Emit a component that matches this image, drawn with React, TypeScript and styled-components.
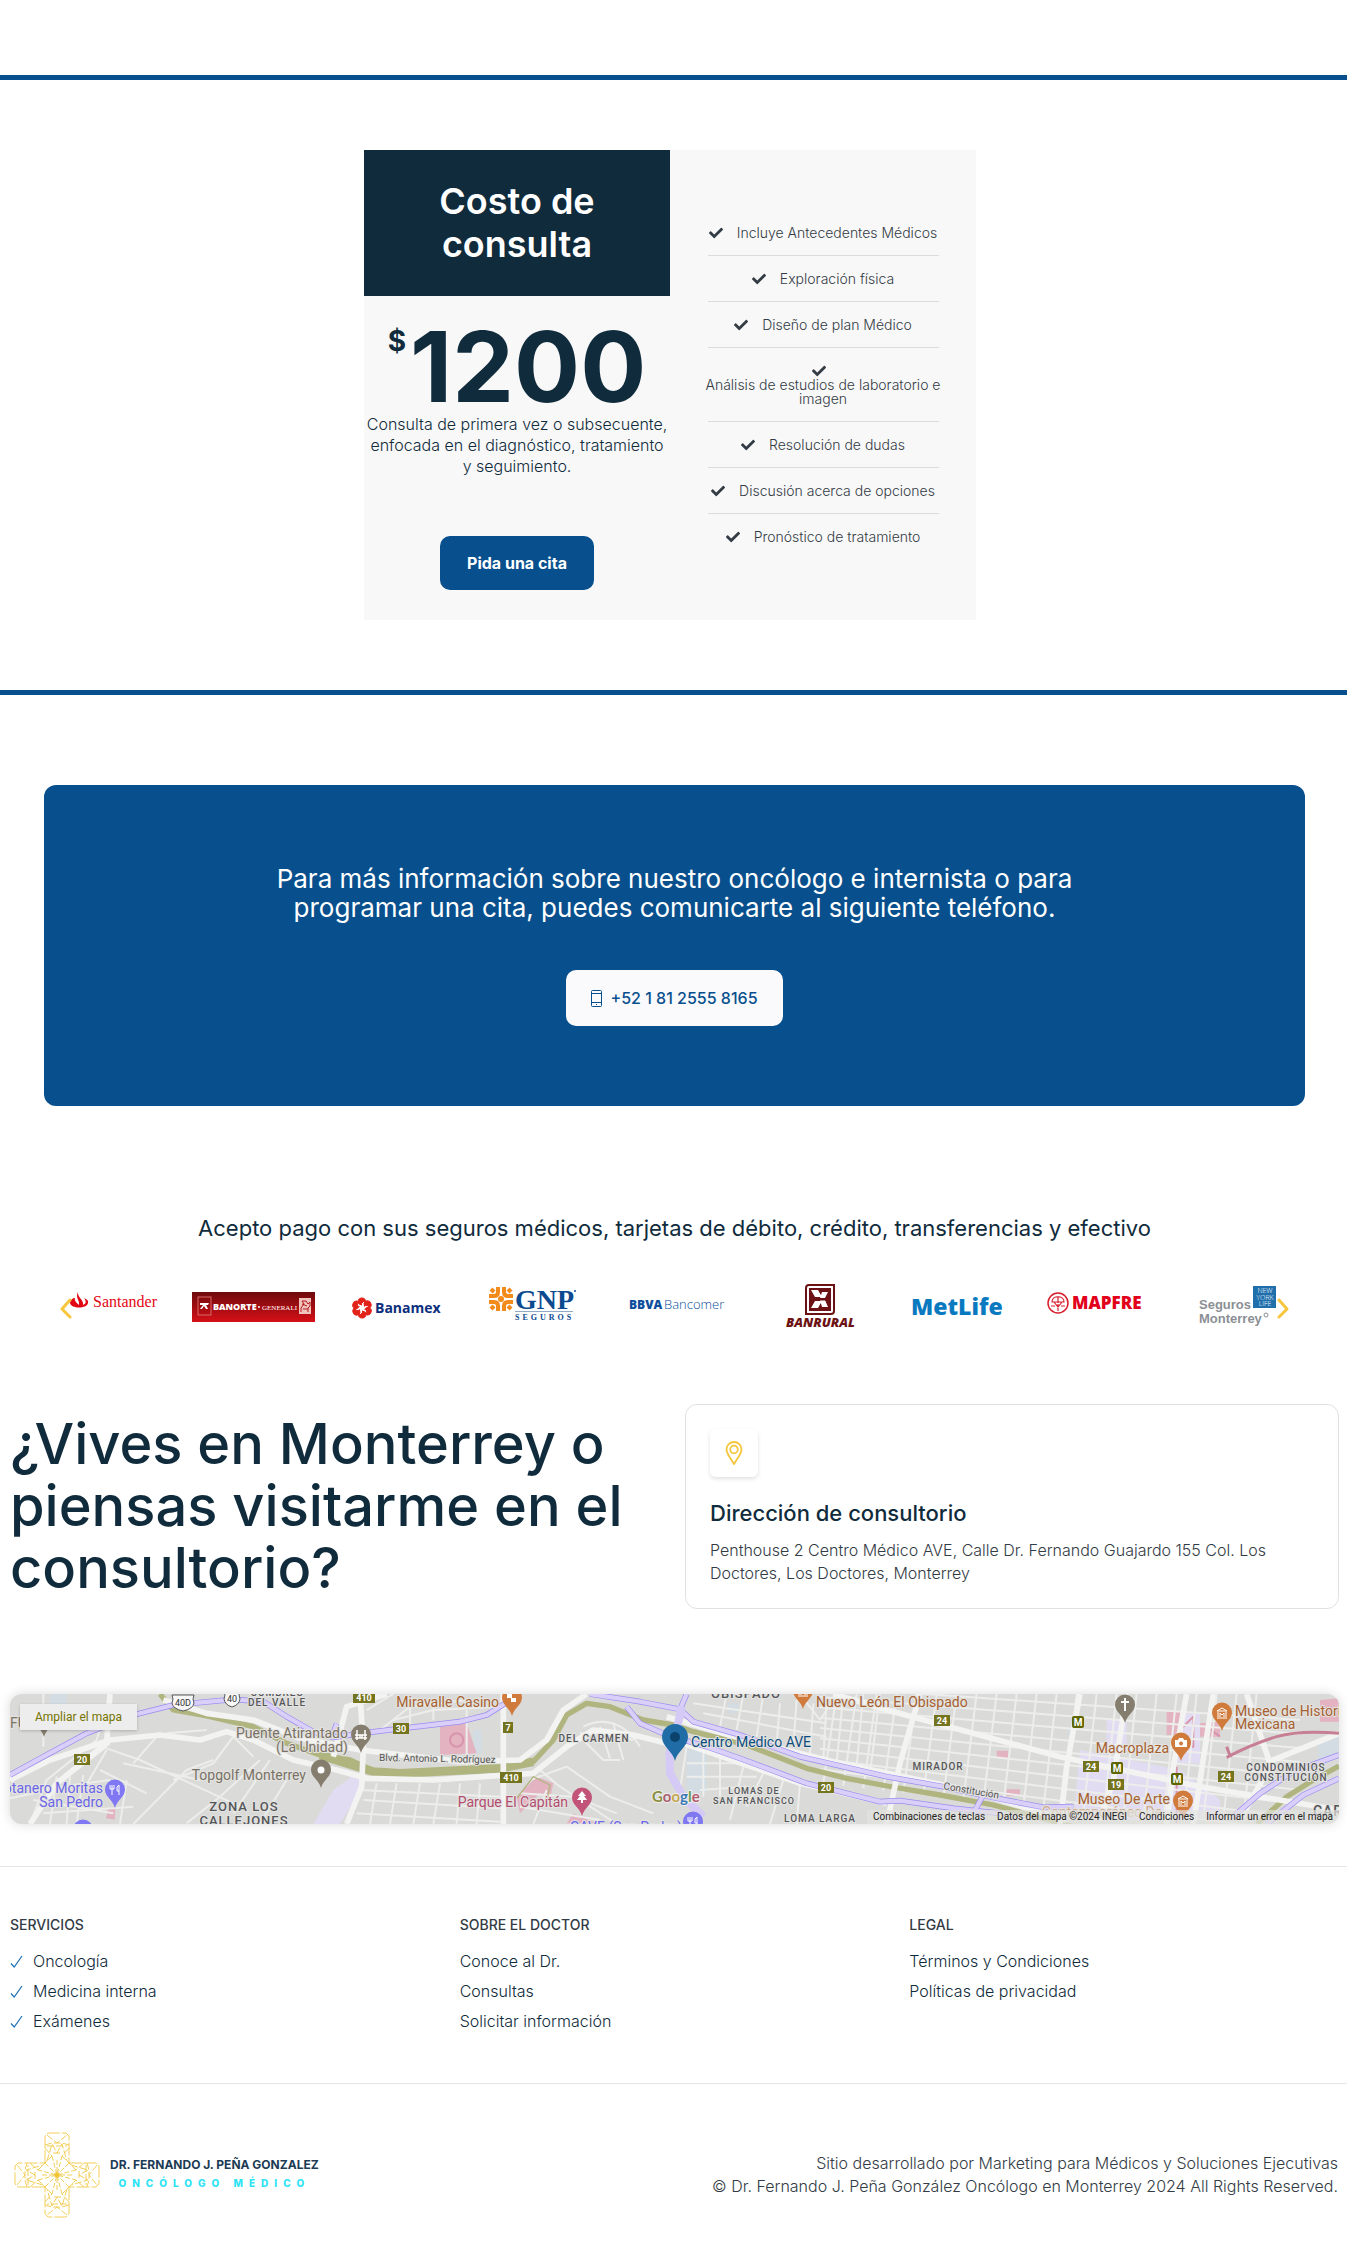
import React from "react";
import styled, { createGlobalStyle } from "styled-components";
import { FaCheck } from "react-icons/fa";

const navy = "#102b3c";
const blue = "#084f8d";
const yellow = "#f5c53c";

const GlobalStyle = createGlobalStyle`
  *, *::before, *::after { box-sizing: border-box; }
  body {
    margin: 0;
    background: #fff;
    color: #333b45;
    font-family: Inter, "Liberation Sans", sans-serif;
    font-size: 16px;
    font-weight: 300;
  }
  h1, h2, h3, h4, p, ul { margin: 0; padding: 0; }
  ul { list-style: none; }
  a { color: inherit; text-decoration: none; }
  button { font: inherit; border: 0; cursor: pointer; }
`;

const Page = styled.div`
  padding-top: 75px;
  overflow: hidden;
`;

/* ---------- Pricing ---------- */

const PricingSection = styled.section`
  display: flex;
  justify-content: center;
  padding: 70px 20px;
  border: solid ${blue};
  border-width: 5px 0;
`;

const PriceCard = styled.div`
  display: grid;
  grid-template-columns: 1fr 1fr;
  width: 612px;
  margin-right: 7px;
  background: #f8f8f8;
`;

const PriceColumn = styled.div`
  display: flex;
  flex-direction: column;
  align-items: center;
  padding-bottom: 30px;
`;

const PriceHeader = styled.h2`
  width: 100%;
  padding: 30px 60px;
  background: ${navy};
  color: #fff;
  font-size: 36px;
  font-weight: 600;
  line-height: 43px;
  text-align: center;
`;

const Price = styled.p`
  display: flex;
  align-items: flex-start;
  gap: 4px;
  margin-top: 23px;
  color: ${navy};
  font-size: 98px;
  font-weight: 700;
  line-height: 95px;
`;

const Currency = styled.span`
  padding-top: 6px;
  font-size: 28px;
  line-height: 32px;
`;

const PriceNote = styled.p`
  color: ${navy};
  font-size: 16px;
  line-height: 21px;
  text-align: center;
`;

const PrimaryButton = styled.button`
  height: 54px;
  margin-top: 59px;
  padding: 0 27px;
  border-radius: 10px;
  background: ${blue};
  color: #fff;
  font-size: 16px;
  font-weight: 700;
`;

const Features = styled.ul`
  display: flex;
  flex-direction: column;
  justify-content: center;
  padding: 0 30px;
  font-size: 14px;
  line-height: 14px;
`;

const Feature = styled.li`
  display: flex;
  flex-wrap: wrap;
  align-items: center;
  justify-content: center;
  column-gap: 6px;
  text-align: center;

  & + &::before {
    content: "";
    flex: 0 0 231px;
    height: 1px;
    margin: 15px 5px 16px;
    background: #dadcde;
  }
`;

const FeatureCheck = styled(FaCheck)`
  margin-right: 8px;
`;

/* ---------- Call to action ---------- */

const CallBox = styled.section`
  display: flex;
  flex-direction: column;
  align-items: center;
  gap: 48px;
  margin: 90px 42px 0 44px;
  padding: 79px 20px 80px;
  border-radius: 12px;
  background: ${blue};
`;

const CallTitle = styled.h2`
  max-width: 860px;
  color: #fff;
  font-size: 26px;
  font-weight: 400;
  line-height: 29px;
  text-align: center;
`;

const PhoneLink = styled.a`
  display: flex;
  align-items: center;
  gap: 8px;
  height: 56px;
  padding: 0 25px;
  border-radius: 10px;
  background: #fafafc;
  color: ${blue};
  font-size: 16px;
  font-weight: 500;
`;

/* ---------- Payments ---------- */

const Payments = styled.section`
  margin: 108px 42px 0 44px;
`;

const PaymentsTitle = styled.h2`
  color: ${navy};
  font-size: 22px;
  font-weight: 400;
  line-height: 28px;
  text-align: center;
`;

const Carousel = styled.div`
  position: relative;
  margin-top: 38px;
`;

const LogoRow = styled.ul`
  display: grid;
  grid-template-columns: repeat(9, 1fr);
`;

const LogoCell = styled.li`
  display: flex;
  justify-content: center;
`;

const ArrowButton = styled.button<{ $side: "left" | "right" }>`
  position: absolute;
  top: 16px;
  ${(p) => p.$side}: 16px;
  display: flex;
  padding: 0;
  background: none;
`;

/* ---------- Location ---------- */

const Location = styled.section`
  display: grid;
  grid-template-columns: 1fr 654px;
  gap: 20px;
  align-items: center;
  margin: 74px 8px 0 10px;
`;

const LocationTitle = styled.h2`
  padding-bottom: 2px;
  color: ${navy};
  font-size: 56px;
  font-weight: 500;
  line-height: 62px;
`;

const AddressCard = styled.div`
  padding: 24px 24px 23px;
  border: 1px solid #dfe1e3;
  border-radius: 12px;
`;

const PinBox = styled.span`
  display: flex;
  align-items: center;
  justify-content: center;
  width: 48px;
  height: 48px;
  border-radius: 6px;
  box-shadow: 0 2px 4px rgba(0, 0, 0, 0.12);
`;

const AddressTitle = styled.h3`
  margin-top: 22px;
  color: ${navy};
  font-size: 22px;
  font-weight: 500;
  line-height: 28px;
`;

const AddressText = styled.p`
  margin-top: 12px;
  font-size: 16px;
  line-height: 23px;
`;

const MapFrame = styled.div`
  position: relative;
  height: 130px;
  margin: 85px 8px 0 10px;
  border-radius: 12px;
  overflow: hidden;
  background: #dadbd8;
  box-shadow: 0 0 12px rgba(0, 0, 0, 0.15);
  font-family: Roboto, sans-serif;
  font-weight: 400;
`;

const MapArt = styled.svg`
  display: block;
  width: 100%;
  height: 100%;
`;

const MapLink = styled.a`
  position: absolute;
  top: 10px;
  left: 10px;
  padding: 0 15px;
  background: #ededed;
  box-shadow: 0 1px 3px rgba(0, 0, 0, 0.2);
  color: #747400;
  font-size: 12px;
  line-height: 26px;
`;

const MapCredits = styled.div`
  position: absolute;
  right: 0;
  bottom: 0;
  display: flex;
  gap: 12px;
  padding: 0 6px;
  background: rgba(226, 226, 224, 0.7);
  color: #222;
  font-size: 10px;
  line-height: 14px;
`;

/* ---------- Footer ---------- */

const Footer = styled.footer`
  margin-top: 42px;
  border-top: 1px solid #e6e6e6;
`;

const FooterColumns = styled.div`
  display: grid;
  grid-template-columns: repeat(3, 1fr);
  gap: 20px;
  padding: 48px 8px 50px 10px;
  border-bottom: 1px solid #e6e6e6;
`;

const FooterHeading = styled.h4`
  font-size: 14px;
  font-weight: 500;
  line-height: 20px;
  text-transform: uppercase;
`;

const FooterList = styled.ul`
  display: grid;
  gap: 6px;
  margin-top: 14px;
  color: ${navy};
  line-height: 24px;
`;

const FooterLink = styled.a`
  display: flex;
  align-items: center;
  gap: 10px;
`;

const FooterBottom = styled.div`
  display: flex;
  align-items: center;
  justify-content: space-between;
  padding: 48px 9px 42px 14px;
`;

const Brand = styled.a`
  display: flex;
  align-items: center;
  gap: 10px;
`;

const BrandText = styled.span`
  display: grid;
  gap: 3px;
  padding-bottom: 4px;
  text-align: center;
`;

const BrandName = styled.strong`
  color: #1c3b54;
  font-size: 12px;
  font-weight: 700;
  line-height: 17px;
`;

const BrandRole = styled.span`
  color: #2fe3f5;
  font-size: 10px;
  font-weight: 800;
  line-height: 14px;
  letter-spacing: 6px;
`;

const Copyright = styled.p`
  line-height: 23px;
  text-align: right;
`;

/* ---------- Icons and logos ---------- */

const PhoneIcon = () => (
  <svg width="11" height="17" viewBox="0 0 11 17" fill="none" stroke={blue} aria-hidden="true">
    <rect x="0.5" y="0.5" width="10" height="16" rx="1" />
    <path d="M0.5 3.5h10M0.5 12.5h10M5 14.5h1" />
  </svg>
);

const PinIcon = () => (
  <svg width="24" height="24" viewBox="0 0 24 24" fill="none" stroke={yellow} strokeWidth="1.8" aria-hidden="true">
    <path d="M12 23C9 17.5 4.5 13 4.500 8.500a7.500 7.500 0 0 1 15 0C19.500 13 15 17.500 12 23z" />
    <circle cx="12" cy="8.500" r="3.800" />
  </svg>
);

const ThinCheck = () => (
  <svg width="13" height="13" viewBox="0 0 13 13" fill="none" stroke="#1d6fb5" strokeWidth="1.200" aria-hidden="true">
    <path d="M1 8.500 4.200 12 12 1" />
  </svg>
);

const Chevron = ({ flip }: { flip?: boolean }) => (
  <svg width="12" height="24" viewBox="0 0 12 24" fill="none" stroke="#f7c63e" strokeWidth="3" strokeLinecap="round" strokeLinejoin="round" aria-hidden="true">
    <path d={flip ? "M2 4l8 9-8 8" : "M10 4 2 13l8 8"} />
  </svg>
);

const Logo = ({ label, children }: { label: string; children: React.ReactNode }) => (
  <LogoCell>
    <svg width="140" height="50" viewBox="0 0 140 50" role="img" aria-label={label}>
      {children}
    </svg>
  </LogoCell>
);

const sans = "Open Sans, sans-serif";
const serif = "Liberation Serif, serif";

const Logos = () => (
  <LogoRow>
    <Logo label="Santander">
      <path d="M34 12c-1 5 6 8 5 13 4-2 3-4 1-7 4 2 4.500 3 4 5-1 6-17 6-18 0 0-3 3-5 5-5-1 3 2 5 4 7 1-5-4-7-1-13z" fill="#e30613" />
      <text x="49" y="27" fontFamily={serif} fontSize="16" fill="#e30613">Santander</text>
    </Logo>
    <Logo label="Banorte Generali">
      <defs>
        <linearGradient id="banorte" x1="0" x2="0" y1="0" y2="1">
          <stop offset="0" stopColor="#6e0a0c" />
          <stop offset="1" stopColor="#d60f17" />
        </linearGradient>
      </defs>
      <rect x="8" y="12" width="123" height="30" fill="url(#banorte)" />
      <rect x="14" y="17" width="13" height="18" fill="none" stroke="#d86b66" />
      <path d="M16 23h9l-1 2h-2l2 4h-2l-2-3-2 3h-2l3-4h-3z" fill="#fff" />
      <text x="29" y="30" fontFamily={sans} fontSize="9" fontWeight="800" fill="#fff">BANORTE</text>
      <circle cx="75" cy="27" r="1" fill="#fff" />
      <text x="78" y="30" fontFamily={serif} fontSize="7" fill="#fff">GENERALI</text>
      <rect x="115" y="18" width="12" height="16" fill="#f1c3bd" />
      <path d="M117 32v-4l3-4-2-3h4l2 3 2-2v4l-2 2v4M119 29h5M118 24l5 2" stroke="#b3181c" fill="none" />
    </Logo>
    <Logo label="Banamex">
      {[0, 60, 120, 180, 240, 300].map((a) => (
        <path key={a} transform={`rotate(${a} 38 28)`} d="M35 24c-2-4 0-6 3-6s5 3 3 6l-1-3-3 3 1 1z" fill="#e2231a" stroke="#e2231a" />
      ))}
      <text x="51" y="33" fontFamily={sans} fontSize="14" fontWeight="700" fill="#0d2f7d">Banamex</text>
    </Logo>
    <Logo label="GNP Seguros">
      {[0, 90, 180, 270].map((a) => (
        <g key={a} transform={`rotate(${a} 37 19)`} fill="none" stroke="#f28a1c">
          <path d="M34 7v5c0 3-2 4-4 4h-5" strokeWidth="4" />
          <path d="M30 12l-3-3" strokeWidth="4" />
        </g>
      ))}
      <circle cx="37" cy="19" r="3" fill="#f28a1c" />
      <text x="51" y="29" fontFamily={serif} fontSize="28" fontWeight="700" fill="#0b4a8f">GNP</text>
      <circle cx="111" cy="11" r="1" fill="#0b4a8f" />
      <path d="M51 31.500h58" stroke="#8fa9c8" />
      <text x="51" y="40" fontFamily={serif} fontSize="8" fontWeight="700" letterSpacing="3" fill="#0b4a8f">SEGUROS</text>
    </Logo>
    <Logo label="BBVA Bancomer">
      <text x="25" y="29" fontFamily={sans} fontSize="12" fontWeight="800" fill="#0b4f9c">BBVA</text>
      <text x="60" y="29" fontFamily={sans} fontSize="13" fill="#0b4f9c">Bancomer</text>
    </Logo>
    <Logo label="Banrural">
      <path d="M64 5h25v26a3 3 0 0 1-3 3H61V8a3 3 0 0 1 3-3z" fill="#fff" stroke="#6d1214" strokeWidth="2" />
      <rect x="64" y="8" width="22" height="23" fill="#6d1214" />
      <path d="M66 10h7l4 7h-7zM66 28h7l4-7h-7zM77 12h6l-3 6h-5zM77 27h6l-3-7h-5z" fill="#fff" />
      <path d="M67 19.500h16" stroke="#6d1214" strokeWidth="2" />
      <text x="41" y="47" fontFamily={sans} fontSize="13" fontWeight="800" fontStyle="italic" fill="#6d1214">BANRURAL</text>
    </Logo>
    <Logo label="MetLife">
      <text x="26" y="35" fontFamily={sans} fontSize="23" fontWeight="800" fill="#0a7ac0">MetLife</text>
    </Logo>
    <Logo label="Mapfre">
      <circle cx="33" cy="23" r="10" fill="none" stroke="#d81e2c" strokeWidth="1.500" />
      <path d="M33 31v-7M27 22c0-7 12-7 12 0zM29 22l4 5 4-5M33 17v6M26 26h4M36 26h4" fill="none" stroke="#d81e2c" strokeWidth="1.200" />
      <text x="47" y="29" fontFamily={sans} fontSize="17" fontWeight="800" fill="#e2001a">MAPFRE</text>
    </Logo>
    <Logo label="Seguros Monterrey New York Life">
      <text x="34" y="29" fontFamily="Liberation Sans, sans-serif" fontSize="13" fontWeight="700" fill="#8b8f94">Seguros</text>
      <text x="34" y="43" fontFamily="Liberation Sans, sans-serif" fontSize="13" fontWeight="700" fill="#8b8f94">Monterrey</text>
      <circle cx="101" cy="35" r="2" fill="none" stroke="#8b8f94" />
      <rect x="88" y="6" width="23" height="22" fill="#1f6fad" />
      <g fontFamily={sans} fontSize="7" fill="#fff" textAnchor="middle">
        <text x="100" y="13">NEW</text>
        <text x="100" y="20">YORK</text>
        <text x="100" y="26">LIFE</text>
      </g>
    </Logo>
  </LogoRow>
);

const crossArm = (
  <>
    <path d="M31 31V4l3-3h18l3 3v27" strokeDasharray="13 2" />
    <path d="M33 3l10 8L53 3M31 13l7-2h10l7 2M33 29l5-17 5 9 5-9 5 17M31 16l7 8-7 7M55 16l-7 8 7 7M39 21h8M33 14h20" strokeDasharray="7 2" />
    <path d="M38 24l5 19 5-19M31 31l12 12M43 28v15" strokeDasharray="5 2" />
  </>
);

const BrandMark = () => (
  <svg width="86" height="86" viewBox="0 0 86 86" fill="none" stroke="#f2cf5b" aria-hidden="true">
    {[0, 90, 180, 270].map((a) => (
      <g key={a} transform={`rotate(${a} 43 43)`}>{crossArm}</g>
    ))}
    <circle cx="43" cy="43" r="2.500" fill="#f2c230" />
  </svg>
);

/* ---------- Map ---------- */

type Pin = { x: number; y: number; fill: string; glyph: React.ReactNode };

const tree = <path d="M0-7l4 5H2l3 4H1v3h-2V2h-4l3-4h-2z" fill="#fff" />;
const museum = <path d="M-5-2l5-3 5 3zM-4-1v5M4-1v5M-5 5H5M-2 4V0l2 2 2-2v4" stroke="#fff" fill="none" />;
const camera = <path d="M-6-3h3l1-2h4l1 2h3v7H-6zM0-1.500a2 2 0 1 0 .1 0z" fill="#fff" fillRule="evenodd" />;
const cutlery = <path d="M-3-5v10M-5-5v4h4v-4M4 5V-5Q1-4 2 1h2" stroke="#fff" fill="none" />;
const bridge = <path d="M-6 3H6M-6 0H6M-4-5V5M4-5V5M-1 0v3M1 0v3" stroke="#fff" fill="none" strokeWidth="1.500" />;
const church = <path d="M0-7V6M-4-3H4" stroke="#fff" strokeWidth="2" />;
const dot = <circle r="3.500" fill="#fff" />;
const dice = <path d="M-5-4h5v4h4v4h-5v-4h-4z" fill="#fff" />;

const pins: Pin[] = [
  { x: 34, y: 43, fill: "#857d6e", glyph: null },
  { x: 351, y: 59, fill: "#857d6e", glyph: bridge },
  { x: 311, y: 94, fill: "#857d6e", glyph: dot },
  { x: 105, y: 114, fill: "#7f78f2", glyph: cutlery },
  { x: 73, y: 154, fill: "#7f78f2", glyph: null },
  { x: 502, y: 22, fill: "#d07a3c", glyph: dice },
  { x: 572, y: 122, fill: "#c25479", glyph: tree },
  { x: 683, y: 146, fill: "#7f78f2", glyph: cutlery },
  { x: 793, y: 15, fill: "#d07a3c", glyph: museum },
  { x: 1115, y: 29, fill: "#857d6e", glyph: church },
  { x: 1171, y: 67, fill: "#d07a3c", glyph: camera },
  { x: 1212, y: 37, fill: "#d07a3c", glyph: museum },
  { x: 1173, y: 125, fill: "#d07a3c", glyph: museum },
];

const shields: [string, number, number][] = [
  ["20", 72, 66], ["410", 354, 4], ["30", 391, 35], ["7", 498, 34], ["410", 501, 84],
  ["20", 816, 94], ["24", 932, 27], ["24", 1081, 73], ["19", 1106, 91], ["24", 1216, 83],
];

const metros: [number, number][] = [[1068, 28], [1107, 74], [1167, 85]];

const minorRoads = [
  "M130 42V200M150 330L320 200M30 355L150 330 250 240 330 190M250 330L320 210M90 432L140 300 290 180 330 42M320 205L420 240 700 370M370 250L600 300M400 432L560 270 640 240M470 170L400 250M440 340L300 270M500 160L620 150M520 300L640 250 700 170M560 430L660 350 780 240M810 240L700 400M700 170L760 230M860 300L780 430",
  "M110 330L330 300M100 360L340 400M170 290L150 432M210 290L200 432M250 285L230 432M380 300L360 432M130 400L400 380",
  "M1080 330L1500 350M1090 360L1500 385M1070 400L1500 425M1130 310L1110 432M1190 310L1170 432M1260 310L1240 432M1320 310L1300 432M1380 310L1370 432M1440 310L1430 432",
  "M1100 90L1180 42M1140 150L1230 80 1400 60M1180 120L1300 90 1500 80M1230 60V140M1300 60V120M1400 90V280",
  "M1740 160L1820 160 1900 180M1750 180L1810 240 1860 240M1800 140L1830 235M1840 130L1870 240M1750 140C1830 100 1890 150 1920 200",
  "M1590 300L1700 260 1830 350 1960 400M1620 270L1680 320 1850 432M1560 340L1720 350 1850 400M1560 380L1800 420M1640 330L1600 432",
  "M2060 200L2040 330M2110 220V350M2160 230V350M2060 250H2240M2060 290H2270M2100 330L2240 320M2230 260L2190 420M2290 280L2240 380M2350 300L2310 432M2400 310L2390 432",
  "M2080 70L2480 130M2110 100L2480 170M2180 42L2160 140M2230 42L2210 150M2290 42L2270 170M2340 70L2330 190M2390 60L2380 200M2440 70L2430 220M2480 60L2470 240M2530 42L2510 250M2590 42L2570 260M2640 42L2610 280M2400 42L2460 120 2500 60",
];

const gridRoads = [
  ...Array.from({ length: 22 }, (_, i) => `M${2510 + i * 60} 42L${2470 + i * 60} ${310 + Math.min(i * 7, 110)}`),
  ...Array.from({ length: 9 }, (_, i) => `M2460 ${20 + i * 31}L3900 ${120 + i * 42}`),
];

const whiteRoads = [
  "M30 300L150 240 330 180 480 165 600 180 680 155 760 180 880 240 1010 270 1100 295 1300 300 1600 280 1700 200 1780 150 1900 165 2000 190",
  "M490 60L620 100 760 120 900 175 1080 210 1380 245 1560 240 1640 180 1690 90 1760 42",
  "M1080 42L1090 200 1085 320 1040 432M330 42L320 190 170 310 90 432M1000 230L1040 80 1160 42M1510 42V432",
  "M2000 110L2240 180 2500 245 2900 330 3200 420M2050 190L2400 310 2660 370",
  "M2760 42L2700 250 2660 432M3240 42L3200 260 3180 432M3380 42L3340 300 3300 420M3560 42L3520 260 3500 432M2500 42L2661 90 3180 230 3600 320 4017 390M3640 42L3580 432M3740 42L3810 250M4017 160L3820 240 3720 420",
];

const purpleRoads = [
  "M30 285L130 230 260 160 400 105 520 75 700 58 790 65 860 110 940 155 1000 172 1080 160 1380 125 1460 105 1560 42",
  "M1000 160L1010 130",
  "M1770 42L1920 65 2040 88 2060 42M2040 88L2080 125 2220 165 2400 230 2661 290 2830 320 2990 355 3130 382 3220 380",
  "M1880 80L1920 130 2000 165 2120 200 2220 235 2420 310 2640 365 2700 362 2861 385 3000 400",
  "M3700 410L3780 340 3880 275 4017 225M3800 432L3910 345 4017 295M2950 345L2920 400",
];

const caps: [string, number, number, number][] = [
  ["CUMBRES", 267, 2, 10], ["DEL VALLE", 267, 12, 10], ["ZONA LOS", 234, 117, 13], ["CALLEJONES", 234, 131, 13],
  ["DEL CARMEN", 584, 48, 10], ["OBISPADO", 736, 4, 13], ["LOMAS DE", 744, 100, 9], ["SAN FRANCISCO", 744, 110, 9],
  ["LOMA LARGA", 810, 128, 10], ["MIRADOR", 928, 76, 10], ["CONDOMINIOS", 1276, 77, 10], ["CONSTITUCIÓN", 1276, 87, 10],
  ["CAR", 1318, 122, 14],
];

type Place = [string, number, number, string, "start" | "end"];
const places: Place[] = [
  ["Puente Atirantado", 338, 44, "#7a7165", "end"],
  ["(La Unidad)", 338, 58, "#7a7165", "end"],
  ["Topgolf Monterrey", 296, 86, "#7a7165", "end"],
  ["Botanero Moritas", 93, 99, "#6a64e6", "end"],
  ["San Pedro", 93, 113, "#6a64e6", "end"],
  ["FU", 0, 34, "#7a7165", "start"],
  ["Miravalle Casino", 489, 13, "#a65f30", "end"],
  ["Parque El Capitán", 558, 113, "#b34c70", "end"],
  ["GAVE (San Pedro)", 560, 138, "#6a64e6", "start"],
  ["Centro Médico AVE", 681, 53, "#0b4c7d", "start"],
  ["Nuevo León El Obispado", 806, 13, "#a65f30", "start"],
  ["Macroplaza", 1159, 59, "#a65f30", "end"],
  ["Museo de Historia", 1225, 22, "#a65f30", "start"],
  ["Mexicana", 1225, 35, "#a65f30", "start"],
  ["Museo De Arte", 1160, 110, "#a65f30", "end"],
];

const pinPath = "M0 0C-2-8-10-11-10-18.500a10 10 0 0 1 20 0C10-11 2-8 0 0z";

const MapDrawing = () => (
  <MapArt viewBox="0 0 1329 130" preserveAspectRatio="xMidYMid slice" role="img" aria-label="Mapa de Monterrey">
    <g transform="scale(0.33333) translate(-30 -42)" fill="none" strokeLinejoin="round">
      <path d="M150 42h50v40h-50zM1420 150h25v70h-25zM2060 210h60v130h-60zM2185 70h30v30h-30zM3955 180l62-20v60l-62 50zM3205 150h20v40h-20z" fill="#d2dce2" />
      <path d="M1000 330l70-50 30 20-80 132h-80zM3240 210l300 60 120 90v60h-440zM3320 120h60v100h-60zM3520 100h80v150h-80z" fill="#e2dcf3" />
      <path d="M1320 140l80-10 30 90-110 5zM3500 95h40v70h-40zM3960 60l57-5v70h-57zM2990 212h35v22h-35zM3020 328h40v20h-40zM325 385l22-6-3 40-26-4zM1550 350l60-60 50 20-10 50-30-20-60 60zM1720 400l70 30h-90zM3600 130l60-5v45h-60z" fill="#e3b3c2" />
      <path d="M1370 180m-20 0a20 20 0 1 0 40 0a20 20 0 1 0-40 0M3620 140l40 30M3540 150l40-40v90h-30zM3530 260v170" stroke="#d894ad" strokeWidth="6" />
      <g stroke="#edeeec" strokeWidth="6">
        {minorRoads.map((d) => <path key={d} d={d} />)}
        {gridRoads.map((d) => <path key={d} d={d} />)}
      </g>
      <path d="M480 42L520 90 620 108 760 140 860 190 960 225 1050 240 1120 272 1200 280 1380 270 1500 265 1600 245 1660 180 1700 105 1760 70 1830 80 1930 120 2020 135 2080 155 2240 195 2420 265 2540 295 2661 318 2820 345 2980 375 3110 410 3220 440M3771 432L3860 350 3940 300 4017 258" stroke="#b0b57f" strokeWidth="16" />
      <path d="M960 225L1120 275 1200 280 1500 265 1600 245" stroke="#b0b57f" strokeWidth="26" />
      <g stroke="#f3f3f2" strokeWidth="17">
        {whiteRoads.map((d) => <path key={d} d={d} />)}
      </g>
      <g stroke="#9a8cf0" strokeWidth="17">
        {purpleRoads.map((d) => <path key={d} d={d} />)}
      </g>
      <g stroke="#d9cff8" strokeWidth="13">
        {purpleRoads.map((d) => <path key={d} d={d} />)}
      </g>
      <path d="M2045 80L2030 150 2008 220 2010 280 2050 350 2110 410" stroke="#d5c9f6" strokeWidth="24" />
      <path d="M3680 232Q3760 190 3830 170 3900 150 4017 160M3680 200l12 32" stroke="#c77f94" strokeWidth="9" />
      <path d="M1550 355L1600 290 1650 315 1640 365" stroke="#b0b57f" strokeWidth="4" />
    </g>

    <g stroke="#e4e4e1" strokeWidth="2" paintOrder="stroke" strokeLinejoin="round">
      {caps.map(([t, x, y, s]) => (
        <text key={t} x={x} y={y} fontSize={s} fontWeight="500" letterSpacing="1" textAnchor="middle" fill="#55565a">{t}</text>
      ))}
      {places.map(([t, x, y, c, anchor]) => (
        <text key={t} x={x} y={y} fontSize="14" textAnchor={anchor} fill={c}>{t}</text>
      ))}
      <text x="369" y="67" fontSize="10" fill="#555" transform="rotate(1 369 67)">Blvd. Antonio L. Rodríguez</text>
      <text x="933" y="95" fontSize="10" fill="#555" transform="rotate(10 933 95)">Constitución</text>
      <text x="1092" y="123" fontSize="14" textAnchor="middle" fill="#cfa890">Contemporáneo De</text>
    </g>

    {shields.map(([t, x, y], i) => (
      <g key={i} transform={`translate(${x} ${y})`}>
        <rect x={t.length * -3 - 2} y="-6" width={t.length * 6 + 4} height="11" fill="#74741f" />
        <text y="3" fontSize="9" fontWeight="700" textAnchor="middle" fill="#fff">{t}</text>
      </g>
    ))}
    {metros.map(([x, y]) => (
      <g key={x} transform={`translate(${x} ${y})`}>
        <rect x="-6" y="-6" width="12" height="12" rx="2" fill="#5f6600" />
        <text y="4" fontSize="10" fontWeight="700" textAnchor="middle" fill="#fff">M</text>
      </g>
    ))}
    {[["40D", 173, 9, 11], ["40", 222, 5, 8]].map(([t, x, y, r]) => (
      <g key={t} transform={`translate(${x} ${y})`}>
        <path d={`M-${r}-8h${Number(r) * 2}q-2 4 0 8-1 6-${r} 8-${Number(r) - 1}-2-${r}-8 2-4 0-8z`} fill="#f7f7f7" stroke="#55565a" />
        <text y="3" fontSize="9" textAnchor="middle" fill="#333">{t}</text>
      </g>
    ))}
    {pins.map((p) => (
      <g key={`${p.x}-${p.y}`} transform={`translate(${p.x} ${p.y})`}>
        <path d={pinPath} fill={p.fill} />
        <g transform="translate(0 -18)">{p.glyph}</g>
      </g>
    ))}
    <g transform="translate(665 67)">
      <path d="M0 0C-2-10-13-14-13-24a13 13 0 0 1 26 0C13-14 2-10 0 0z" fill="#1f6ca6" />
      <circle cy="-24" r="5" fill="#0b436c" />
    </g>
    <text x="642" y="108" fontSize="15" fontFamily="Lato, sans-serif" fontWeight="700" stroke="#eee" strokeWidth="2" paintOrder="stroke">
      <tspan fill="#8a8f3c">G</tspan><tspan fill="#a86070">o</tspan><tspan fill="#c2a54e">o</tspan><tspan fill="#3a78b5">g</tspan><tspan fill="#6d9a58">l</tspan><tspan fill="#b55a6a">e</tspan>
    </text>
  </MapArt>
);

/* ---------- Content ---------- */

const features = [
  "Incluye Antecedentes Médicos",
  "Exploración física",
  "Diseño de plan Médico",
  "Análisis de estudios de laboratorio e imagen",
  "Resolución de dudas",
  "Discusión acerca de opciones",
  "Pronóstico de tratamiento",
];

const columns = [
  { title: "Servicios", checked: true, links: ["Oncología", "Medicina interna", "Exámenes"] },
  { title: "Sobre el doctor", checked: false, links: ["Conoce al Dr.", "Consultas", "Solicitar información"] },
  { title: "Legal", checked: false, links: ["Términos y Condiciones", "Políticas de privacidad"] },
];

export default function App() {
  return (
    <Page>
      <GlobalStyle />

      <PricingSection>
        <PriceCard>
          <PriceColumn>
            <PriceHeader>Costo de consulta</PriceHeader>
            <Price><Currency>$</Currency>1200</Price>
            <PriceNote>Consulta de primera vez o subsecuente, enfocada en el diagnóstico, tratamiento y&nbsp;seguimiento.</PriceNote>
            <PrimaryButton type="button">Pida una cita</PrimaryButton>
          </PriceColumn>
          <Features>
            {features.map((f) => (
              <Feature key={f}>
                <FeatureCheck size={14} aria-hidden="true" />
                <span>{f}</span>
              </Feature>
            ))}
          </Features>
        </PriceCard>
      </PricingSection>

      <CallBox>
        <CallTitle>
          Para más información sobre nuestro oncólogo e internista o para programar una cita, puedes comunicarte al siguiente teléfono.
        </CallTitle>
        <PhoneLink href="tel:+5218125558165"><PhoneIcon />+52 1 81 2555 8165</PhoneLink>
      </CallBox>

      <Payments>
        <PaymentsTitle>Acepto pago con sus seguros médicos, tarjetas de débito, crédito, transferencias y efectivo</PaymentsTitle>
        <Carousel>
          <Logos />
          <ArrowButton type="button" $side="left" aria-label="Anterior"><Chevron /></ArrowButton>
          <ArrowButton type="button" $side="right" aria-label="Siguiente"><Chevron flip /></ArrowButton>
        </Carousel>
      </Payments>

      <Location>
        <LocationTitle>¿Vives en Monterrey o piensas visitarme en el consultorio?</LocationTitle>
        <AddressCard>
          <PinBox><PinIcon /></PinBox>
          <AddressTitle>Dirección de consultorio</AddressTitle>
          <AddressText>Penthouse 2 Centro Médico AVE, Calle Dr. Fernando Guajardo 155 Col. Los Doctores, Los Doctores, Monterrey</AddressText>
        </AddressCard>
      </Location>

      <MapFrame>
        <MapDrawing />
        <MapLink href="#mapa">Ampliar el mapa</MapLink>
        <MapCredits>
          <span>Combinaciones de teclas</span>
          <span>Datos del mapa ©2024 INEGI</span>
          <a href="#condiciones">Condiciones</a>
          <a href="#informar">Informar un error en el mapa</a>
        </MapCredits>
      </MapFrame>

      <Footer>
        <FooterColumns>
          {columns.map((c) => (
            <nav key={c.title} aria-label={c.title}>
              <FooterHeading>{c.title}</FooterHeading>
              <FooterList>
                {c.links.map((l) => (
                  <li key={l}>
                    <FooterLink href="#">{c.checked && <ThinCheck />}{l}</FooterLink>
                  </li>
                ))}
              </FooterList>
            </nav>
          ))}
        </FooterColumns>
        <FooterBottom>
          <Brand href="#">
            <BrandMark />
            <BrandText>
              <BrandName>DR. FERNANDO J. PEÑA GONZALEZ</BrandName>
              <BrandRole>ONCÓLOGO MÉDICO</BrandRole>
            </BrandText>
          </Brand>
          <Copyright>
            Sitio desarrollado por Marketing para Médicos y Soluciones Ejecutivas
            <br />
            © Dr. Fernando J. Peña González Oncólogo en Monterrey 2024 All Rights Reserved.
          </Copyright>
        </FooterBottom>
      </Footer>
    </Page>
  );
}
